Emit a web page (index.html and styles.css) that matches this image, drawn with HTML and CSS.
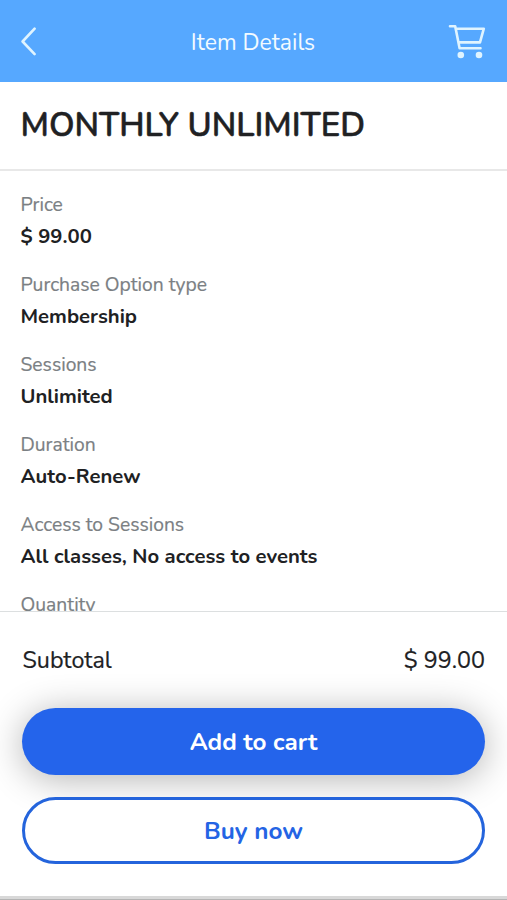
FILE: index.html
```html
<!DOCTYPE html>
<html lang="en">
<head>
<meta charset="utf-8">
<title>Item Details</title>
<link rel="stylesheet" href="styles.css">
</head>
<body>
<div class="screen">
  <header class="topbar">
    <svg class="back" viewBox="0 0 18 30" aria-hidden="true"><path d="M14.6 1.7 L2.6 14.5 L14.6 27.1"/></svg>
    <h1 class="topbar-title">Item Details</h1>
    <svg class="cart" viewBox="0 0 38 36" aria-hidden="true">
      <path d="M2 2.2 H7.2 L11.6 24.3 H32.5 M7.6 4.7 H35.8 L32 18.4 H10.6"/>
      <circle cx="12.8" cy="31" r="3.3"/><circle cx="31" cy="31" r="3.3"/>
    </svg>
  </header>
  <section class="heading"><h2 class="item-name">MONTHLY UNLIMITED</h2></section>
  <main class="details">
    <dl class="list">
      <div class="row"><dt>Price</dt><dd>$ 99.00</dd></div>
      <div class="row"><dt>Purchase Option type</dt><dd>Membership</dd></div>
      <div class="row"><dt>Sessions</dt><dd>Unlimited</dd></div>
      <div class="row"><dt>Duration</dt><dd>Auto-Renew</dd></div>
      <div class="row"><dt>Access to Sessions</dt><dd>All classes, No access to events</dd></div>
      <div class="row"><dt>Quantity</dt></div>
    </dl>
  </main>
  <footer class="checkout">
    <div class="subtotal"><span>Subtotal</span><span>$ 99.00</span></div>
    <button class="btn primary">Add to cart</button>
    <button class="btn outline">Buy now</button>
  </footer>
</div>
</body>
</html>
```

FILE: styles.css
```css
* { box-sizing: border-box; margin: 0; padding: 0; }
body { font-family: Nunito, Lato, sans-serif; color: #202123; background: #fff; }
.screen { height: 900px; display: flex; flex-direction: column; border-bottom: 1px solid #b4b4b4; box-shadow: inset 0 -3px #d8d8d8; overflow: hidden; }
.topbar { height: 82px; flex: none; display: flex; align-items: center; justify-content: space-between; background: #56a8ff; padding: 2px 21px 0 20px; color: #f2faff; }
.back { width: 18px; height: 30px; margin-right: 20px; }
.cart { width: 38px; height: 36px; }
.back path, .cart path { fill: none; stroke: #e0f4ff; stroke-width: 2.6; stroke-linecap: round; stroke-linejoin: round; }
.cart circle { fill: #e0f4ff; }
.topbar-title { font-size: 23px; line-height: 30px; font-weight: 400; padding-top: 1px; }
.heading { height: 89px; flex: none; display: flex; align-items: center; padding: 0 20.5px; border-bottom: 2px solid #e8e8e8; }
.item-name { font-size: 33px; line-height: 40px; font-weight: 600; -webkit-text-stroke: .5px currentColor; }
.details { flex: 1; min-height: 0; overflow: hidden; padding: 18px 20.5px 0; }
.row { height: 80px; }
dt { font-size: 19.3px; line-height: 32px; color: #7b8083; white-space: nowrap; -webkit-text-stroke: .2px currentColor; }
dd { font-size: 20.3px; line-height: 30px; font-weight: 700; white-space: nowrap; }
.checkout { height: 285px; flex: none; margin-bottom: 3px; border-top: 1px solid #dcdfe0; padding: 32px 22px 0; display: flex; flex-direction: column; background: #fff; }
.subtotal { display: flex; justify-content: space-between; font-size: 23.3px; line-height: 32px; margin-bottom: 32px; padding-left: .5px; -webkit-text-stroke: .2px currentColor; }
.btn { height: 67px; flex: none; border-radius: 34px; font: 700 24.3px/30px Nunito, Lato, sans-serif; }
.primary { border: 0; background: #2464eb; color: #fff; box-shadow: 0 4px 36px rgba(0,0,0,.3); margin-bottom: 22px; }
.outline { position: relative; border: 3px solid #2464dc; background: #fff; color: #2464e4; }
```
